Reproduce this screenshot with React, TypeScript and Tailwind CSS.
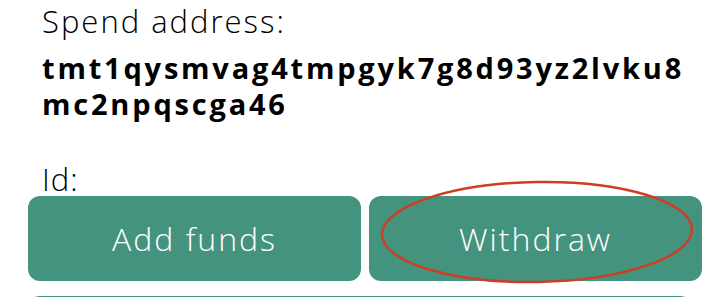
import React from "react";

export default function App() {
  return (
    <div className="relative w-[720px] h-[297px] overflow-hidden bg-white text-black" style={{ fontFamily: '"Open Sans", "DejaVu Sans", sans-serif' }}>
      <div className="pl-[42px] pt-[2px]">
        <div className="text-[31px] leading-[38px] font-light tracking-[2px]">Spend address:</div>
        <div className="mt-[10px] text-[29px] leading-[36px] font-bold tracking-[2.8px] whitespace-nowrap">
          <div>tmt1qysmvag4tmpgyk7g8d93yz2lvku8</div>
          <div>mc2npqscga46</div>
        </div>
        <div className="mt-[42px] text-[31px] leading-[30px] font-light tracking-[1px]">Id:</div>
      </div>
      <div className="px-[28px] mt-[2px] grid grid-cols-2 gap-[8px] w-[730px]">
        <div className="h-[85px] rounded-[12px] bg-[#44937e] flex items-center justify-center text-white text-[32px] font-light tracking-[2px]">Add funds</div>
        <div className="h-[85px] rounded-[12px] bg-[#44937e] flex items-center justify-center text-white text-[32px] font-light tracking-[2px]">Withdraw</div>
      </div>
      <div className="mx-[28px] mt-[15px] h-[40px] rounded-[12px] bg-[#44937e]" />
      <svg className="absolute left-0 top-0 pointer-events-none" width="720" height="297">
        <ellipse cx="537" cy="232" rx="155" ry="50" fill="none" stroke="#d23b24" strokeWidth="2.5" transform="rotate(-1 537 232)" />
      </svg>
    </div>
  );
}
